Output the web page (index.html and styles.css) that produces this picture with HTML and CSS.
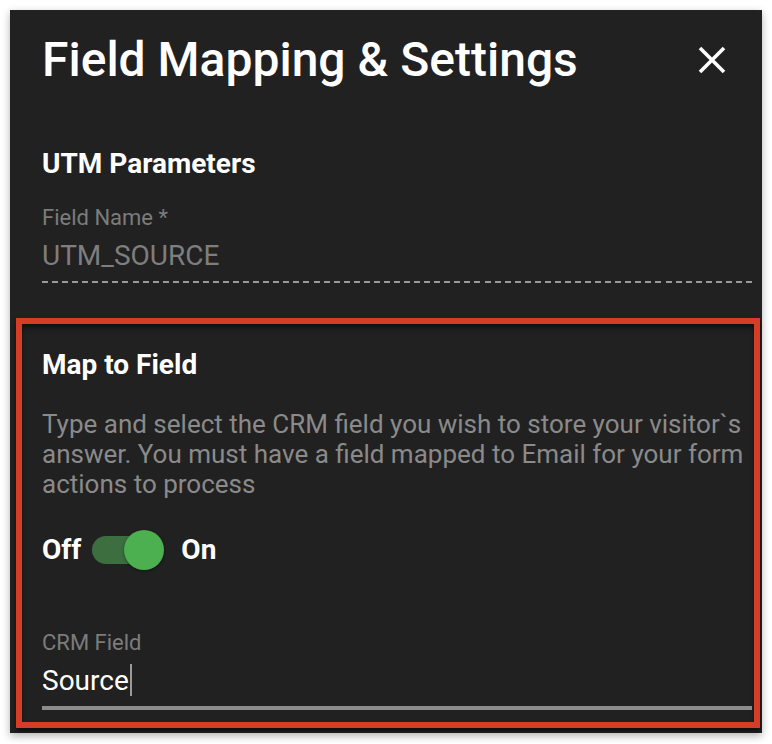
FILE: index.html
```html
<!DOCTYPE html>
<html lang="en">
<head>
    <meta charset="UTF-8">
    <meta name="viewport" content="width=device-width, initial-scale=1.0">
    <title>Field Mapping &amp; Settings</title>
    <link rel="stylesheet" href="styles.css">
</head>
<body>

<div class="dialog">
    <div class="dialog-header">
        <h1>Field Mapping &amp; Settings</h1>
        <button class="close-btn" aria-label="Close">
            <svg width="28" height="28" viewBox="0 0 28 28">
                <path d="M2 2 L26 26 M26 2 L2 26" stroke="#fff" stroke-width="3.6" fill="none"/>
            </svg>
        </button>
    </div>

    <div class="section">
        <h3>UTM Parameters</h3>
        <label class="field-label">Field Name *</label>
        <div class="field-value">UTM_SOURCE</div>
        <div class="dashed"></div>
    </div>

    <div class="section map-section">
        <h3>Map to Field</h3>
        <p class="hint">Type and select the CRM field you wish to store your visitor`s answer. You must have a field mapped to Email for your form actions to process</p>

        <div class="toggle-row">
            <span>Off</span>
            <span class="switch">
                <span class="track"></span>
                <span class="thumb"></span>
            </span>
            <span>On</span>
        </div>

        <label class="field-label crm-label">CRM Field</label>
        <div class="crm-input">Source<span class="caret"></span></div>
    </div>
</div>

</body>
</html>
```

FILE: styles.css
```css
body {
    margin: 0;
    background-color: #fff;
    font-family: Roboto, "Liberation Sans", sans-serif;
}
.dialog {
    margin: 10px;
    width: 752px;
    height: 723px;
    box-sizing: border-box;
    background-color: #212121;
    color: #fff;
    box-shadow: 0 3px 8px rgba(0, 0, 0, 0.3);
    overflow: hidden;
}
.dialog-header {
    display: flex;
    align-items: center;
    justify-content: space-between;
    padding: 22px 36px 0 32px;
}
.dialog-header h1 {
    margin: 0;
    font-size: 48px;
    line-height: 56px;
    font-weight: 500;
}
.close-btn {
    background: none;
    border: 0;
    padding: 0;
    width: 28px;
    height: 28px;
    display: block;
}
.section {
    padding: 0 10px 0 32px;
}
h3 {
    margin: 59px 0 0;
    font-size: 28px;
    line-height: 34px;
    font-weight: 700;
}
.field-label {
    display: block;
    margin-top: 24px;
    font-size: 22px;
    line-height: 26px;
    color: #7c7c7c;
}
.field-value {
    margin-top: 8px;
    font-size: 28px;
    line-height: 34px;
    color: #7e7e7e;
}
.dashed {
    margin-top: 8px;
    height: 2px;
    background: repeating-linear-gradient(to right, #9a9a9a 0 6px, transparent 6px 10.057px);
}
.map-section {
    margin: 35px 2px 0 6px;
    padding: 24px 2px 12px 20px;
    border: 6px solid #d63d27;
    box-shadow: 0 3px 4px rgba(0, 0, 0, 0.6), inset 0 4px 5px rgba(0, 0, 0, 0.5);
}
.map-section h3 {
    margin-top: 0;
}
.hint {
    margin: 27px 0 0;
    font-size: 26px;
    line-height: 30px;
    color: #8a8a8a;
}
.toggle-row {
    display: flex;
    align-items: center;
    margin-top: 31px;
    height: 40px;
    font-size: 28px;
    line-height: 34px;
    font-weight: 700;
}
.switch {
    position: relative;
    display: flex;
    align-items: center;
    width: 72px;
    height: 40px;
    margin: 0 17px 0 11px;
}
.track {
    width: 68px;
    height: 28px;
    border-radius: 14px;
    background-color: #3c6e3f;
}
.thumb {
    position: absolute;
    right: 0;
    top: 0;
    width: 40px;
    height: 40px;
    border-radius: 50%;
    background-color: #4caf50;
    box-shadow: 0 1px 3px rgba(0, 0, 0, 0.4);
}
.crm-label {
    margin-top: 60px;
}
.crm-input {
    margin-top: 8px;
    padding-bottom: 8px;
    border-bottom: 4px solid #8c8c8c;
    font-size: 28px;
    line-height: 34px;
    color: #fff;
}
.caret {
    display: inline-block;
    width: 2px;
    height: 32px;
    margin-left: 1px;
    vertical-align: -6px;
    background-color: #9a9a9a;
}
```
